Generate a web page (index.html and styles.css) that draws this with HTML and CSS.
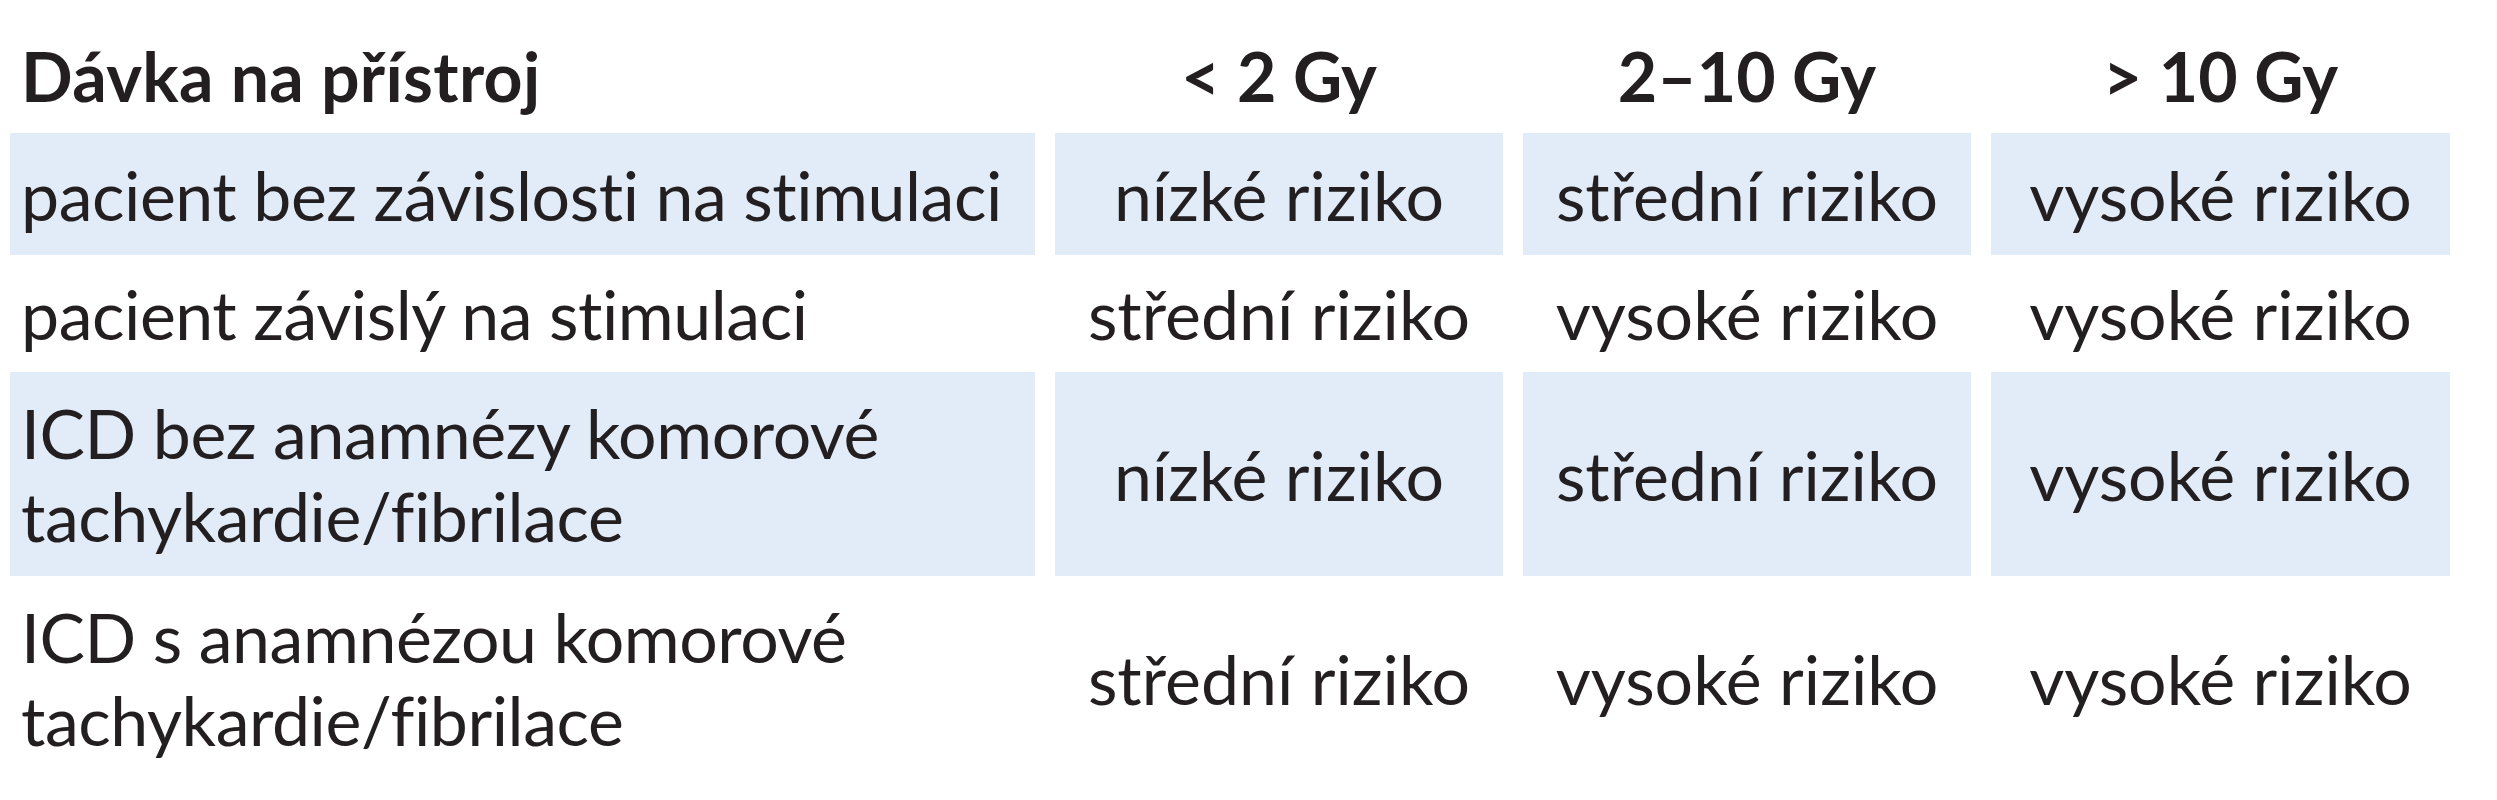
FILE: index.html
```html
<!DOCTYPE html>
<html lang="cs">
<head>
<meta charset="utf-8">
<title>Dávka na přístroj</title>
<link rel="stylesheet" href="styles.css">
</head>
<body>
<div class="table">
  <div class="cell head first">Dávka na přístroj</div>
  <div class="cell head">&lt; 2 Gy</div>
  <div class="cell head">2–10 Gy</div>
  <div class="cell head">&gt; 10 Gy</div>

  <div class="cell first shade">pacient bez závislosti na stimulaci</div>
  <div class="cell shade">nízké riziko</div>
  <div class="cell shade">střední riziko</div>
  <div class="cell shade">vysoké riziko</div>

  <div class="cell first">pacient závislý na stimulaci</div>
  <div class="cell">střední riziko</div>
  <div class="cell">vysoké riziko</div>
  <div class="cell">vysoké riziko</div>

  <div class="cell first shade">ICD bez anamnézy komorové<br>tachykardie/fibrilace</div>
  <div class="cell shade">nízké riziko</div>
  <div class="cell shade">střední riziko</div>
  <div class="cell shade">vysoké riziko</div>

  <div class="cell first">ICD s anamnézou komorové<br>tachykardie/fibrilace</div>
  <div class="cell">střední riziko</div>
  <div class="cell">vysoké riziko</div>
  <div class="cell">vysoké riziko</div>
</div>
</body>
</html>
```
FILE: styles.css
```css
html, body {
  margin: 0;
  padding: 0;
  background: #ffffff;
}

body {
  width: 2497px;
  height: 800px;
  overflow: hidden;
  font-family: "Lato", "Liberation Sans", sans-serif;
  color: #231f20;
}

.table {
  display: grid;
  grid-template-columns: 1025px 448px 448px 459px;
  grid-template-rows: 133px 122px 117px 204px 204px;
  column-gap: 20px;
  padding-left: 10px;
}

.cell {
  display: flex;
  align-items: center;
  justify-content: center;
  text-align: center;
  font-size: 68px;
  line-height: 83px;
  white-space: nowrap;
}

.cell.first {
  justify-content: flex-start;
  text-align: left;
  padding-left: 11px;
  letter-spacing: -0.45px;
}

.cell.head {
  align-items: flex-end;
  padding-bottom: 16px;
  font-weight: 700;
}

.cell.head.first {
  letter-spacing: 0.3px;
}

.shade {
  background: #e1ecf8;
}
```
